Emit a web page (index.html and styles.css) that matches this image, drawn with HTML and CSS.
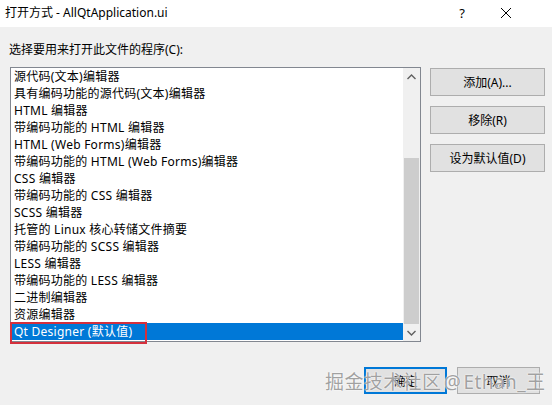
FILE: index.html
```html
<!DOCTYPE html>
<html lang="zh-CN">
<head>
    <meta charset="UTF-8">
    <meta name="viewport" content="width=device-width, initial-scale=1.0">
    <title>打开方式 - AllQtApplication.ui</title>
    <link rel="stylesheet" href="styles.css">
</head>
<body>
    <div class="dialog">
        <div class="titlebar">
            <span class="title">打开方式 - AllQtApplication.ui</span>
            <span class="title-btn help">?</span>
            <span class="title-btn close">
                <svg width="12" height="12" viewBox="0 0 12 12">
                    <path d="M1 1 L11 11 M11 1 L1 11" stroke="#000" stroke-width="1" fill="none"/>
                </svg>
            </span>
        </div>

        <div class="content">
            <div class="prompt">选择要用来打开此文件的程序(C):</div>

            <div class="main-row">
                <div class="listbox">
                    <ul class="items">
                        <li>源代码(文本)编辑器</li>
                        <li>具有编码功能的源代码(文本)编辑器</li>
                        <li>HTML 编辑器</li>
                        <li>带编码功能的 HTML 编辑器</li>
                        <li>HTML (Web Forms)编辑器</li>
                        <li>带编码功能的 HTML (Web Forms)编辑器</li>
                        <li>CSS 编辑器</li>
                        <li>带编码功能的 CSS 编辑器</li>
                        <li>SCSS 编辑器</li>
                        <li>托管的 Linux 核心转储文件摘要</li>
                        <li>带编码功能的 SCSS 编辑器</li>
                        <li>LESS 编辑器</li>
                        <li>带编码功能的 LESS 编辑器</li>
                        <li>二进制编辑器</li>
                        <li>资源编辑器</li>
                        <li class="selected">Qt Designer (默认值)</li>
                    </ul>
                    <div class="scrollbar">
                        <div class="arrow">
                            <svg width="9" height="6" viewBox="0 0 9 6">
                                <path d="M0.5 5 L4.5 1 L8.5 5" stroke="#606060" stroke-width="1.4" fill="none"/>
                            </svg>
                        </div>
                        <div class="track">
                            <div class="thumb"></div>
                        </div>
                        <div class="arrow">
                            <svg width="9" height="6" viewBox="0 0 9 6">
                                <path d="M0.5 1 L4.5 5 L8.5 1" stroke="#606060" stroke-width="1.4" fill="none"/>
                            </svg>
                        </div>
                    </div>
                    <!-- red marker round the default entry -->
                    <div class="marker"></div>
                </div>

                <div class="side-buttons">
                    <button class="btn">添加(A)...</button>
                    <button class="btn">移除(R)</button>
                    <button class="btn">设为默认值(D)</button>
                </div>
            </div>

            <div class="footer">
                <button class="btn btn-small default">确定</button>
                <button class="btn btn-small">取消</button>
            </div>
        </div>

        <div class="watermark">掘金技术社区 @ Ethan_王</div>
    </div>
</body>
</html>
```

FILE: styles.css
```css
body {
    margin: 0;
    font-family: "Noto Sans", "Noto Sans CJK SC", sans-serif;
    font-size: 12px;
    color: #000;
    background: #f0f0f0;
}
.dialog {
    position: relative;
    width: 552px;
    height: 405px;
    overflow: hidden;
    background: #f0f0f0;
}
.titlebar {
    display: flex;
    align-items: center;
    height: 27px;
    padding-left: 5px;
    background: #fff;
}
.title {
    flex: 1;
    line-height: 16px;
    padding-bottom: 2px;
}
.title-btn {
    display: flex;
    align-items: center;
    justify-content: center;
    height: 27px;
    padding-bottom: 2px;
    box-sizing: border-box;
}
.help {
    width: 16px;
    margin-right: 29px;
    font-size: 13px;
}
.close {
    width: 14px;
    margin-right: 39px;
}
.content {
    padding: 15px 7px 0 10px;
}
.prompt {
    line-height: 16px;
    margin-left: -1px;
    margin-bottom: 9px;
}
.main-row {
    display: flex;
    gap: 9px;
}
.listbox {
    position: relative;
    flex: none;
    display: flex;
    width: 411px;
    height: 275px;
    box-sizing: border-box;
    border: 1px solid #828790;
    background: #fff;
}
.items {
    flex: 1;
    list-style: none;
    margin: 0;
    padding: 0;
    overflow: hidden;
}
.items li {
    height: 17px;
    line-height: 17px;
    padding-left: 3px;
    letter-spacing: 0.25px;
    white-space: nowrap;
}
.items li.selected {
    background: #0078d7;
    color: #fff;
}
.scrollbar {
    display: flex;
    flex-direction: column;
    width: 17px;
    background: #f0f0f0;
}
.arrow {
    display: flex;
    align-items: center;
    justify-content: center;
    height: 17px;
}
.track {
    flex: 1;
    display: flex;
    flex-direction: column;
    justify-content: flex-end;
}
.thumb {
    height: 166px;
    margin: 0 1px;
    background: #cdcdcd;
}
.marker {
    position: absolute;
    left: -1px;
    top: 254px;
    width: 137px;
    height: 22px;
    box-sizing: border-box;
    border: 2px solid #d4303c;
}
.side-buttons {
    display: flex;
    flex-direction: column;
    gap: 10px;
    margin-top: 1px;
}
.btn {
    width: 115px;
    height: 28px;
    padding: 0;
    font-family: inherit;
    font-size: 12px;
    color: #000;
    background: #e1e1e1;
    border: 1px solid #adadad;
}
.footer {
    display: flex;
    justify-content: flex-end;
    gap: 10px;
    margin-top: 25px;
    margin-right: 5px;
}
.btn-small {
    width: 83px;
    height: 27px;
}
.btn.default {
    border: 2px solid #0078d7;
}
.watermark {
    position: absolute;
    left: 325px;
    top: 369px;
    font-size: 19px;
    line-height: 26px;
    letter-spacing: 0.4px;
    word-spacing: -3px;
    color: rgba(130, 130, 130, 0.75);
    text-shadow: 0 0 1px #fff, 0 0 2px #fff;
    white-space: nowrap;
}
```
